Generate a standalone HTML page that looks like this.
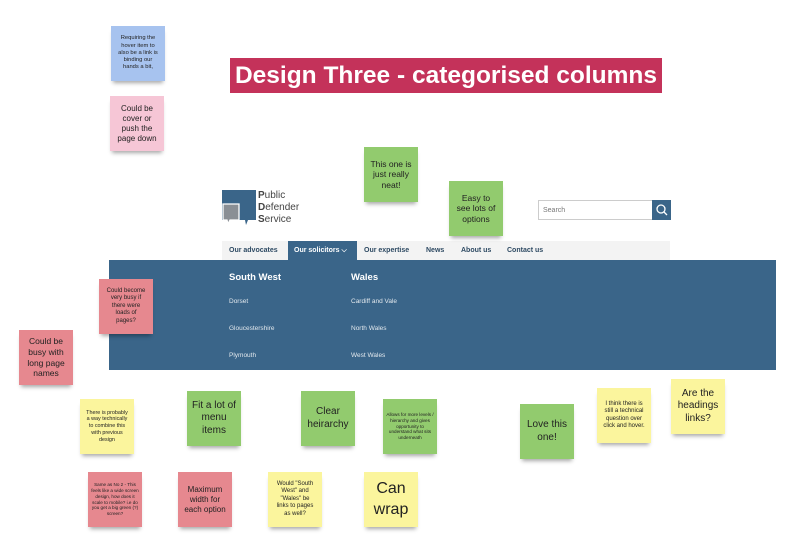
<!DOCTYPE html>
<html><head><meta charset="utf-8"><style>
*{margin:0;padding:0;box-sizing:border-box}
body{width:796px;height:554px;background:#fff;position:relative;overflow:hidden;font-family:"Liberation Sans",sans-serif;color:#222}
.n{position:absolute;width:54px;height:55px;display:flex;align-items:center;justify-content:center;text-align:center;box-shadow:0 4px 4px -2px rgba(0,0,0,.35);color:#222;line-height:1.25;padding:0 5px}
.y{background:#fbf59d}.g{background:#92cb6e}.r{background:#e6888f}.p{background:#f6c6d6}.b{background:#a7c3ef}
.s{font-size:5.4px}.m{font-size:8.5px}.l{font-size:10px}
.panel{position:absolute;left:109px;top:260px;width:667px;height:110px;background:#3a6589}
.t{position:absolute;color:#fff;font-size:6.5px;opacity:.85}
.h{position:absolute;color:#fff;font-size:9.5px;font-weight:bold}
.nav{position:absolute;left:222px;top:241px;width:448px;height:20px;background:#f3f3f3;font-size:7px;font-weight:bold;color:#2e4a63}
.nav span{position:absolute;top:6px}
</style></head><body>
<div style="position:absolute;left:230px;top:58px;width:432px;height:35px;background:#c4325a;color:#fff;font-weight:bold;font-size:24.5px;text-align:center;line-height:35px;white-space:nowrap;overflow:hidden">Design Three - categorised columns</div>

<svg style="position:absolute;left:222px;top:190px" width="34" height="38" viewBox="0 0 34 38"><path d="M0 0h34v30h-8l-2 5-1-5H0z" fill="#3a6589"/><path d="M1 14h16v16H8l-2 4-1-4H1z" fill="#8a8f95" stroke="#fff" stroke-width="1.3"/></svg>
<div style="position:absolute;left:258px;top:190px;font-size:10px;line-height:12px;color:#444"><b>P</b>ublic<br><b>D</b>efender<br><b>S</b>ervice</div>
<div style="position:absolute;left:538px;top:200px;width:115px;height:20px;border:1px solid #ccc;font-size:7px;color:#777;padding:6px 4px">Search</div>
<div style="position:absolute;left:652px;top:200px;width:19px;height:20px;background:#3a6589"><svg width="19" height="20"><circle cx="9" cy="9" r="4" stroke="#fff" stroke-width="1.3" fill="none"/><path d="M12 12l3 3" stroke="#fff" stroke-width="1.3"/></svg></div>

<div class="nav"><span style="left:7px">Our advocates</span>
<div style="position:absolute;left:66px;top:0;width:69px;height:20px;background:#3a6589"></div>
<span style="left:72px;color:#fff">Our solicitors ⌵</span>
<span style="left:142px">Our expertise</span><span style="left:204px">News</span><span style="left:239px">About us</span><span style="left:285px">Contact us</span></div>
<div class="panel"></div>
<div class="h" style="left:229px;top:272px">South West</div><div class="h" style="left:351px;top:272px">Wales</div>
<div class="t" style="left:229px;top:298px">Dorset</div><div class="t" style="left:351px;top:298px">Cardiff and Vale</div>
<div class="t" style="left:229px;top:325px">Gloucestershire</div><div class="t" style="left:351px;top:325px">North Wales</div>
<div class="t" style="left:229px;top:352px">Plymouth</div><div class="t" style="left:351px;top:352px">West Wales</div>

<div class="n b s" style="left:111px;top:26px;font-size:5.8px">Requiring the hover item to also be a link is binding our hands a bit,</div>
<div class="n p m" style="left:110px;top:96px;font-size:8px;padding:0 4px">Could be cover or push the page down</div>
<div class="n g m" style="left:364px;top:147px">This one is just really neat!</div>
<div class="n g m" style="left:449px;top:181px;padding:0 7px">Easy to see lots of options</div>
<div class="n r s" style="left:99px;top:279px;font-size:6px;padding:0 7px">Could become very busy if there were loads of pages?</div>
<div class="n r m" style="left:19px;top:330px;padding:0 7px">Could be busy with long page names</div>
<div class="n y s" style="left:80px;top:399px">There is probably a way technically to combine this with previous design</div>
<div class="n g l" style="left:187px;top:391px;padding:0 3px">Fit a lot of menu items</div>
<div class="n g l" style="left:301px;top:391px">Clear heirarchy</div>
<div class="n g s" style="left:383px;top:399px;font-size:4.6px;padding:0 3px">Allows for more levels / hierarchy and gives opportunity to understand what sits underneath</div>
<div class="n r s" style="left:88px;top:472px;font-size:4.6px;padding:0 3px">Same as No 2 - This feels like a wide screen design, how does it scale to mobile? i.e do you get a big green (?) screen?</div>
<div class="n r m" style="left:178px;top:472px;font-size:8px;padding:0 3px">Maximum width for each option</div>
<div class="n y s" style="left:268px;top:472px;font-size:6px;padding:0 7px">Would "South West" and "Wales" be links to pages as well?</div>
<div class="n y" style="left:364px;top:472px;font-size:16px;line-height:1.3">Can wrap</div>
<div class="n g l" style="left:520px;top:404px">Love this one!</div>
<div class="n y s" style="left:597px;top:388px;font-size:6px;padding:0 4px">I think there is still a technical question over click and hover.</div>
<div class="n y l" style="left:671px;top:379px;padding:0 3px">Are the headings links?</div>
</body></html>
